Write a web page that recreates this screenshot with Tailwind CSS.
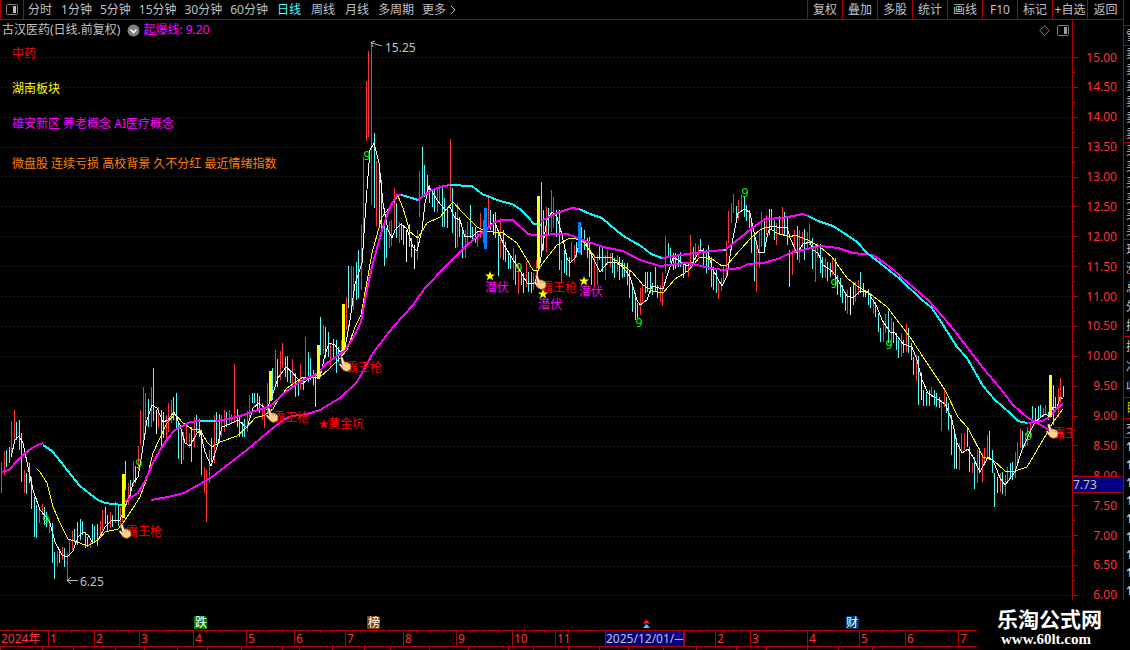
<!DOCTYPE html>
<html lang="zh-CN">
<head>
  <meta charset="UTF-8">
  <meta name="viewport" content="width=device-width, initial-scale=1.0">
  <title>古汉医药 日线</title>
  <script src="https://cdn.jsdelivr.net/npm/@tailwindcss/browser@4"></script>
</head>
<body class="h-screen overflow-hidden bg-black text-[#c0c0c0] text-xs font-['Noto_Sans','Noto_Sans_CJK_SC',sans-serif]">
  <div class="relative flex flex-col h-full">

    <!-- 顶部工具栏 -->
    <header class="flex h-5 shrink-0">
      <div class="flex flex-1 border-b border-[#b00000]">
        <button aria-label="侧栏" class="w-6 shrink-0 border-x border-[#b00000] flex items-center justify-center">
          <svg width="12" height="11" viewBox="0 0 12 11" fill="none"><rect x=".5" y=".5" width="11" height="10" rx="1" stroke="#808080"/><rect x="7" y="2" width="3" height="7" fill="#c0c0c0"/></svg>
        </button>
        <nav class="flex items-center gap-2 pl-[3px] whitespace-nowrap leading-none">
          <button class="px-px">分时</button>
          <button>1分钟</button>
          <button>5分钟</button>
          <button>15分钟</button>
          <button>30分钟</button>
          <button>60分钟</button>
          <button class="px-px text-[#54fcfc]">日线</button>
          <button class="px-px">周线</button>
          <button class="px-px">月线</button>
          <button>多周期</button>
          <button class="flex items-center gap-1">更多<svg width="6" height="10" viewBox="0 0 6 10" fill="none" stroke="#c0c0c0"><path d="M1 1l4 4-4 4"/></svg></button>
        </nav>
        <div class="ml-auto flex whitespace-nowrap leading-none">
          <button class="w-[35px] border-l border-[#b00000]">复权</button>
          <button class="w-[35px] border-l border-[#b00000]">叠加</button>
          <button class="w-[35px] border-l border-[#b00000]">多股</button>
          <button class="w-[35px] border-l border-[#b00000]">统计</button>
          <button class="w-[35px] border-l border-[#b00000]">画线</button>
          <button class="w-[35px] border-l border-[#b00000]">F10</button>
          <button class="w-[35px] border-l border-[#b00000]">标记</button>
          <button class="w-[35px] border-l border-[#b00000]">+自选</button>
          <button class="w-[36px] border-l border-[#b00000]">返回</button>
        </div>
      </div>
      <div class="w-[7px] border-l border-[#b00000]"></div>
    </header>

    <main class="flex flex-1 min-h-0">
      <section class="flex flex-col flex-1 min-w-0">
        <!-- 标题行 -->
        <div class="flex items-center h-5 shrink-0 pl-0.5 pr-[3px] leading-none whitespace-nowrap">
          <h1>古汉医药(日线.前复权)</h1>
          <button aria-label="展开" class="ml-[7px] mr-[3px]">
            <svg width="13" height="13" viewBox="0 0 13 13" fill="none"><circle cx="6.5" cy="6.5" r="6" fill="#808080"/><path d="M3.500 5.500l3 3 3-3" stroke="#fff" stroke-width="1.6"/></svg>
          </button>
          <span class="text-[#ff00ff]">起爆线: 9.20</span>
          <svg class="ml-auto mr-[7px]" width="11" height="11" viewBox="0 0 11 11" fill="none" stroke="#808080"><path d="M5.500.7l4.800 4.800-4.800 4.800L.7 5.500z"/></svg>
          <svg width="12" height="11" viewBox="0 0 12 11" fill="none"><rect x=".5" y=".5" width="11" height="10" rx="1" stroke="#808080"/><rect x="7" y="2" width="3" height="7" fill="#a0a0a0"/></svg>
        </div>

        <!-- K线图 -->
        <svg class="w-full flex-1 min-h-0" viewBox="0 40 1072 590" preserveAspectRatio="xMinYMin meet" fill="none">
          <defs>
            <g id="hand">
              <path d="M-4.500-7.500Q-3-9-2-7L-.5-3Q1.500-3.500 3-2.500 5.500-2 6 0L6 3.500Q4.500 6.500 1 6.500-2 6-3.500 3L-6-.5Q-5.500-2-4-.5L-3 .5z" fill="#ffd08a" stroke="#7a3c10" stroke-width=".8"/>
              <path d="M-3.300-7.500L-2-1.500M-5-.8L-3 2" stroke="#fff" stroke-width="1.200"/>
              <path d="M1-2.500v2.500M3.500-2v2" stroke="#d98c40" stroke-width=".7"/>
            </g>
            <path id="star" d="M0-5L1.300-1.500 5-1.400 2.100.8 3.100 4.400 0 2.300-3.100 4.400-2.100.8-5-1.400-1.300-1.500z"/>
          </defs>

          <path stroke="#a80000" stroke-dasharray="1 3" shape-rendering="crispEdges" d="M1 57.500H1072M1 87.500H1072M1 117.500H1072M1 147.500H1072M1 176.500H1072M1 206.500H1072M1 236.500H1072M1 266.500H1072M1 296.500H1072M1 326.500H1072M1 356.500H1072M1 386.500H1072M1 416.500H1072M1 446.500H1072M1 476.500H1072M1 506.500H1072M1 536.500H1072M1 566.500H1072M1 595.500H1072"/>

          <g shape-rendering="crispEdges" transform="translate(-1 0)">
            <!-- 阳线 -->
            <path stroke="#ff3232" d="M2 462V493M5 451V475M12 421V457M15 410V440M25 470V493M40 508V523M43 504V515M50 519V533M58 551V566M63 547V560M68 553V580M70 540V557M73 531V550M91 542V548M101 521V537M103 510V530M111 512V528M116 501V523M121 507V528M123 507V522M129 483V505M134 461V486M139 446V470M141 410V445M144 387V441M146 393V435M152 387V427M159 407V428M167 415V438M169 403V432M172 400V423M184 432V460M187 425V443M190 433V448M195 417V447M205 467V493M207 470V522M210 450V483M215 415V463M222 415V437M225 410V432M230 410V425M232 414V424M235 364V423M248 411V432M250 395V420M263 403V420M265 408V428M268 383V413M276 350V385M281 351V380M283 343V368M293 359V387M301 364V390M306 337V380M324 325V354M331 343V367M342 340V362M347 297V330M352 266V305M354 267V310M362 225V290M364 157V250M367 81V141M369 51V137M372 45V205M377 161V226M390 221V248M392 220V246M395 188V228M400 222V243M418 230V260M420 171V217M438 188V213M440 185V203M451 139V202M458 203V247M466 230V258M468 222V243M478 232V247M481 213V238M484 220V243M489 197V227M501 218V258M514 248V280M519 263V294M527 262V287M534 273V290M537 260V287M547 207V252M552 190V232M554 197V228M562 260V282M572 242V262M575 245V263M595 255V287M598 255V285M606 255V280M608 250V265M611 253V267M618 255V272M641 288V315M643 285V303M661 285V302M663 273V306M666 236V273M689 263V277M691 235V267M696 243V260M699 245V257M719 283V299M722 278V291M724 265V283M727 241V277M729 211V243M732 203V223M734 194V213M739 200V220M742 194V210M757 240V292M760 232V268M762 212V247M767 215V235M777 223V245M783 207V235M793 250V275M795 230V252M800 230V263M803 232V248M808 232V250M810 224V245M816 245V282M818 243V258M826 258V278M833 257V275M848 290V314M856 282V302M859 280V295M874 298V314M884 322V342M886 314V333M892 318V347M902 333V357M907 324V352M917 355V381M932 387V397M942 400V431M945 388V407M960 443V470M962 433V453M965 433V450M973 463V473M978 450V483M983 453V482M985 448V463M988 435V457M1001 473V492M1006 475V496M1008 467V482M1016 452V478M1018 442V463M1021 429V448M1026 433V447M1028 427V446M1031 423V438M1044 408V417M1046 405V415M1059 388V418M1061 378V403"/>
            <!-- 阴线 -->
            <path stroke="#54fcfc" d="M7 450V467M10 447V463M17 422V440M20 420V450M22 433V482M27 473V494M30 463V483M32 477V509M35 497V537M37 505V538M45 507V525M47 512V527M53 523V563M55 552V579M60 549V563M65 548V567M75 529V542M78 522V545M81 519V540M83 521V535M86 532V548M88 537V547M93 524V543M95 526V542M98 524V546M106 507V524M108 515V532M113 515V527M119 504V526M126 461V490M131 480V497M136 466V483M149 399V427M154 368V421M162 410V447M164 412V438M174 397V420M177 393V430M179 423V459M182 432V464M192 427V462M197 415V432M200 419V437M202 430V475M212 438V462M217 412V443M220 414V442M227 412V427M238 409V427M240 417V437M243 422V437M245 419V437M253 393V403M255 393V403M258 393V410M260 396V413M273 368V400M278 359V387M286 357V377M288 356V382M291 370V383M296 373V397M299 380V396M304 377V390M309 352V382M311 358V380M314 370V385M316 373V407M321 317V355M326 327V358M329 332V357M334 339V358M337 340V373M339 347V362M349 266V308M357 262V300M359 250V298M375 133V208M380 165V225M382 180V230M385 226V266M387 228V258M397 203V238M402 223V240M404 225V245M410 224V247M412 238V257M423 147V195M425 165V197M428 175V190M430 185V203M433 190V207M435 190V212M443 188V227M445 198V227M448 207V228M453 188V233M456 212V248M460 217V237M463 227V258M471 205V238M473 227V242M476 227V243M491 210V230M496 212V238M499 230V276M504 230V260M506 242V262M509 253V269M511 255V269M516 255V285M522 272V285M524 273V293M529 272V292M532 272V293M542 182V255M544 210V250M549 208V235M557 210V237M560 210V270M565 250V273M567 253V275M570 257V277M577 242V257M582 227V255M585 230V250M588 238V258M590 237V277M592 252V285M600 247V260M603 247V272M613 253V273M615 258V278M620 257V280M623 260V278M625 263V277M628 263V285M630 270V298M633 283V312M636 293V320M638 303V318M646 272V293M648 272V292M651 272V293M653 283V295M656 267V292M658 285V298M669 243V257M671 248V263M674 253V270M676 253V269M679 254V267M681 252V267M684 262V278M686 262V273M694 247V263M701 239V253M704 248V267M707 250V273M709 245V270M712 257V287M714 267V290M717 270V293M737 206V223M745 197V217M747 205V221M750 210V228M752 220V253M755 232V281M765 220V253M770 209V235M772 209V230M775 220V240M780 216V235M785 212V235M788 218V245M790 250V287M798 226V260M805 229V260M813 238V269M821 244V273M823 257V278M828 262V281M831 263V277M836 258V285M838 275V295M841 278V297M843 285V303M846 293V311M854 282V305M861 272V293M864 283V297M866 290V297M869 289V305M871 293V308M876 302V317M879 313V332M881 328V342M889 311V343M894 322V343M897 333V350M899 340V358M904 340V353M909 328V353M912 343V360M914 357V375M919 356V405M924 390V406M927 392V406M930 390V406M935 390V405M937 393V407M940 397V408M947 397V413M949 403V430M952 415V455M955 433V469M968 427V447M970 447V472M975 457V489M980 448V473M990 431V460M993 450V473M995 473V507M998 477V493M1003 472V494M1011 463V477M1013 462V480M1023 431V450M1033 406V423M1036 408V422M1039 406V420M1041 405V418M1049 412V420M1054 385V425M1056 397V410M1064 386V397"/>
            <path stroke="#fff" d="M157 410V434M407 230V262M415 245V269M494 214V235M851 287V315M922 373V400M957 443V469"/>
          </g>

          <!-- 均线 -->
          <g stroke-linejoin="round" shape-rendering="crispEdges">
            <path stroke="#fff" d="M11 457L15 440 19 436 23 443 28 467 33 490 40 510 47 518 50 523 55 542 62 555 67 557 73 551 78 537 83 532 88 535 93 543 98 540 105 527 112 520 120 520 125 507 130 495 133 483 138 477 142 453 147 420 152 405 157 408 163 422 168 420 174 412 180 425 185 443 190 446 197 433 200 431 205 452 211 466 217 447 222 427 230 424 238 420 247 428 253 408 259 403 267 410 278 378 286 367 292 372 302 384 310 378 315 375 320 377 325 355 329 343 335 345 340 352 345 348 350 320 355 284 362 263 366 203 370 150 374 143 379 163 383 203 388 230 392 238 395 230 401 224 407 229 413 247 417 251 422 230 425 203 429 186 437 200 445 210 450 207 455 218 460 220 465 237 473 236 477 232 484 231 492 223 495 223 503 243 513 260 518 267 527 283 535 283 540 263 547 220 552 212 557 217 562 235 567 258 570 263 575 258 580 242 585 241 590 252 600 272 608 262 617 263 623 267 630 277 637 300 640 305 647 300 652 286 663 289 668 273 673 258 675 258 687 266 693 262 700 250 708 253 713 270 722 286 727 276 732 243 738 213 745 209 750 213 755 237 759 253 764 252 767 237 770 226 777 227 787 227 790 238 797 253 803 244 810 242 813 250 818 253 823 265 833 272 842 287 847 296 853 298 860 291 868 292 877 307 882 320 890 332 895 333 903 344 912 347 917 360 922 380 928 393 945 404 952 420 957 443 962 453 968 449 973 457 980 472 988 457 993 460 1000 478 1005 485 1015 472 1022 450 1030 432 1035 422 1045 414 1050 417 1053 407 1057 408 1060 397 1063 399"/>
            <path stroke="#ff0" d="M37 469L40 472 47 483 53 507 60 523 68 539 80 543 87 546 93 543 100 538 105 532 118 529 123 523 133 508 140 497 147 478 153 453 160 438 167 423 175 414 183 423 192 429 200 430 207 442 212 447 220 442 237 436 247 427 255 418 265 415 273 409 278 400 287 388 303 377 320 377 328 370 340 358 347 350 355 327 361 315 366 287 372 253 382 217 390 207 398 196 403 208 410 232 418 238 427 223 440 217 453 202 463 213 477 227 485 231 503 233 517 243 533 270 538 270 545 260 557 245 570 238 582 240 588 248 595 257 610 257 620 263 632 272 643 285 653 291 663 293 675 279 688 271 700 257 712 259 722 266 727 265 740 250 752 237 760 230 767 227 777 233 790 237 795 235 808 240 820 247 832 257 847 278 857 286 873 296 887 307 910 337 927 363 945 390 958 417 968 428 983 457 993 460 1005 471 1015 471 1027 467 1037 450 1047 433 1053 422 1063 409"/>
            <path stroke="#f0f" stroke-width="2" d="M151 500L168 497 184 493 200 484 212 477 230 463 247 450 268 432 283 420 292 416 307 414 320 410 340 398 357 382 373 353 393 327 413 305 425 288 447 265 467 245 483 232 495 222 503 220 513 220 528 234 540 236 553 234 567 234 583 240 603 247 623 251 640 260 660 266 687 263 697 265 710 268 723 270 740 268 748 264 763 263 778 259 790 253 807 249 820 246 838 248 853 253 873 255 890 267 900 276 928 300 950 325 967 347 983 368 1000 388 1013 405 1028 418 1043 426 1053 433 1063 433"/>
            <path stroke="#f0f" stroke-width="2" d="M1 472L9 470 17 461 24 454 32 448 38 445 43 443M124 502L130 498 138 493 145 481 152 465 160 450 168 438 175 430 182 426 190 422 200 421M216 421L228 419 240 416 252 412 260 409 268 407 273 404 283 394 295 385 305 379 317 374 327 363 343 352 352 340 361 322 365 300 368 284 373 263 382 230 390 207 397 195 401 195M418 200L430 191 440 187 450 185M541 221L557 213 572 208 579 209M662 258L680 255 703 252 723 250M726 249L740 238 752 228 765 219 783 218 803 214 808 216M1027 423L1042 421 1050 417 1057 408 1063 404"/>
            <path stroke="#0ff" stroke-width="2" d="M43 445L52 451 61 462 71 475 80 486 90 494 98 500 105 503 113 504 122 505M200 421H216M401 195L412 198 418 200M450 185L472 186 482 194 500 201 512 204 520 209 528 217 534 224 541 225M579 209L590 214 602 218 610 225 622 235 632 241 641 246 651 254 662 258M723 250H726M808 216L818 221 833 226 847 235 857 242 867 253 880 263 900 279 922 300 932 308 945 328 957 347 967 358 983 386 995 400 1010 413 1018 421 1027 423"/>
            <path stroke="#ff0" stroke-width="3" d="M123.500 474V518M270.500 371V401M318.500 345V379M343.500 304V350M538.500 196V268M1050.500 375V417"/>
            <path stroke="#0080ff" stroke-width="3" d="M485.500 208V249M579.500 222V253"/>
          </g>

          <!-- 信号标记 -->
          <g fill="#ff0000" font-size="12">
            <text x="126" y="536">霸王枪</text>
            <text x="273" y="422">霸王枪</text>
            <text x="346" y="372">霸王枪</text>
            <text x="541" y="292">霸王枪</text>
            <text x="1053" y="438">霸王枪</text>
            <text x="328" y="428">黄金坑</text>
            <use href="#star" x="324" y="424"/>
          </g>
          <use href="#hand" x="125" y="532"/>
          <use href="#hand" x="272" y="416"/>
          <use href="#hand" x="345" y="365"/>
          <use href="#hand" x="540" y="283"/>
          <use href="#hand" x="1052" y="432"/>
          <g fill="#ff00ff" font-size="12">
            <text x="485" y="292">潜伏</text>
            <text x="538" y="309">潜伏</text>
            <text x="579" y="296">潜伏</text>
          </g>
          <g fill="#ffff00">
            <use href="#star" x="490" y="276"/>
            <use href="#star" x="543" y="294"/>
            <use href="#star" x="584" y="281"/>
          </g>
          <g fill="#00ff00" font-size="12" text-anchor="middle">
            <text x="46" y="524">9</text>
            <text x="139" y="468">9</text>
            <text x="367" y="160">9</text>
            <text x="519" y="272">9</text>
            <text x="639" y="327">9</text>
            <text x="745" y="197">9</text>
            <text x="834" y="288">9</text>
            <text x="889" y="349">9</text>
            <text x="1029" y="440">9</text>
          </g>

          <!-- 最高价 / 最低价 -->
          <g fill="#c0c0c0" font-size="12">
            <text x="385" y="52">15.25</text>
            <text x="80" y="586">6.25</text>
          </g>
          <path stroke="#c0c0c0" d="M382 46L372 43M375 41L371 42.500 373 47M78 580.500H67M71 577L67 580.500 71 584"/>

          <!-- 板块与概念 -->
          <g font-size="12">
            <text x="12" y="58" fill="#ff0000">中药</text>
            <text x="12" y="93" fill="#ffff00">湖南板块</text>
            <text x="12" y="128" fill="#ff00ff">雄安新区 养老概念 AI医疗概念</text>
            <text x="12" y="168" fill="#ff8000">微盘股 连续亏损 高校背景 久不分红 最近情绪指数</text>
          </g>

          <!-- 事件 -->
          <path fill="#008000" d="M194 616h11l2 2v11h-13z"/>
          <path fill="#804000" d="M367 616h11l2 2v11h-13z"/>
          <path fill="#003870" d="M846 616h11l2 2v11h-13z"/>
          <g fill="#ffffff" font-size="12">
            <text x="195" y="627">跌</text>
            <text x="368" y="627">榜</text>
            <text x="846" y="627">财</text>
          </g>
          <path fill="#ff2020" d="M646.500 619.500L650 623.500H643z"/>
          <path fill="#54c8ff" d="M646.500 624L650 628H643z"/>
        </svg>
      </section>

      <!-- 价格轴 -->
      <aside class="relative w-[51px] h-[580px] shrink-0 border-l border-[#b00000] pt-[37px] pb-1 text-[#ff3232]">
        <div id="price-axis" class="flex flex-col justify-between h-full"></div>
        <div class="absolute inset-x-0 top-[456px] h-[17px] border-y border-[#b00000] bg-[#000080] text-[#c0c0c0] leading-[15px]">7.73</div>
      </aside>

      <!-- 右侧信息栏 -->
      <aside class="w-[7px] h-[580px] shrink-0 border-l border-[#b00000] overflow-hidden leading-4">
        <div class="h-[6px] border-b border-[#b00000]"></div>
        <div class="h-5 border-b border-[#b00000] w-3 pl-0.5 pt-0.5">雪</div>
        <div class="h-[97px] border-b border-[#b00000] w-3 pl-0.5 break-all overflow-hidden">卖卖卖卖卖卖</div>
        <div class="h-[97px] border-b border-[#b00000] w-3 pl-0.5 break-all overflow-hidden">买买买买买买</div>
        <div class="h-[97px] border-b border-[#b00000] w-3 pl-0.5 break-all overflow-hidden leading-[19px]">现涨总外换</div>
        <div class="h-[61px] border-b border-[#b00000] w-3 pl-0.5 break-all overflow-hidden leading-5">换净收</div>
        <div class="h-[21px] border-b border-[#b00000] w-3 pl-0.5 leading-5 text-[#c0c000]">目</div>
        <div class="h-[19px] border-b border-[#b00000] w-3 pl-0.5 leading-5">交</div>
        <div class="w-3 pl-0.5 break-all font-bold leading-[18px]">1<br>1<br>1<br>1<br>1<br>1<br>1<br>1<br>1</div>
      </aside>
    </main>

    <!-- 时间轴 -->
    <footer class="shrink-0 h-5 overflow-hidden">
      <div id="time-axis" class="grid h-[17px] border-y border-[#b00000] text-[#ff3232] leading-[15px]"></div>
      <div id="bottom-tabs" class="grid h-[3px]"></div>
    </footer>

    <div class="absolute right-0 bottom-0 w-[153px] h-[45px] bg-black text-white font-bold pl-5">
      <p class="text-[21px] leading-7">乐淘公式网</p>
      <p class="pl-1 text-[15px] leading-3 font-['Liberation_Serif',serif]">www.60lt.com</p>
    </div>
  </div>

  <script>
    // 价格刻度：整档带标签，中间为短刻度
    const priceAxis = document.getElementById('price-axis');
    for (let i = 0; i <= 36; i++) {
      const row = document.createElement('div');
      row.className = 'flex items-center h-px';
      if (i % 2 === 0) {
        row.innerHTML = '<i class="w-[5px] h-px bg-[#b00000]"></i><span class="ml-auto mr-1.5">' + (15 - i / 4).toFixed(2) + '</span>';
      } else {
        row.innerHTML = '<i class="w-0.5 h-px bg-[#b00000]"></i>';
      }
      priceAxis.appendChild(row);
    }

    // 按宽度比例生成列
    const columns = (widths) => widths.map((w) => 'minmax(0, ' + w + 'fr)').join(' ');

    // 月份标签和宽度
    const months = [
      ['2024年', 48], ['1', 46], ['2', 45], ['3', 54], ['4', 53], ['5', 48], ['6', 51], ['7', 58],
      ['8', 53], ['9', 56], ['10', 43], ['11', 50], ['2025/12/01/—', 79], ['', 31], ['2', 35],
      ['3', 57], ['4', 52], ['5', 46], ['6', 53], ['7', 172]
    ];
    const timeAxis = document.getElementById('time-axis');
    timeAxis.style.gridTemplateColumns = columns(months.map((m) => m[1]));
    months.forEach(([label, width], i) => {
      const cell = document.createElement('div');
      cell.className = 'relative border-l border-[#b00000] pl-px whitespace-nowrap';
      if (i === 0) cell.className = 'relative pl-px whitespace-nowrap';
      if (width === 79) cell.className = 'border-x border-[#b00000] whitespace-nowrap overflow-hidden bg-[#000080] text-[#c0c0c0]';
      cell.textContent = label;
      if (i > 0 && width < 79) {
        const ticks = document.createElement('div');
        ticks.className = 'absolute inset-x-0 top-0 flex justify-evenly h-0.5';
        ticks.innerHTML = '<i class="w-px bg-[#b00000]"></i><i class="w-px bg-[#b00000]"></i><i class="w-px bg-[#b00000]"></i>';
        cell.appendChild(ticks);
      }
      timeAxis.appendChild(cell);
    });

    const tabs = [42, 31, 42, 29, 33, 30, 34, 41, 17, 33, 32, 26, 39, 39, 40, 25, 35, 31, 29, 35, 33, 40, 30, 41, 31, 34, 258];
    const bottomTabs = document.getElementById('bottom-tabs');
    bottomTabs.style.gridTemplateColumns = columns(tabs);
    tabs.forEach(() => {
      const tab = document.createElement('div');
      tab.className = 'border-l border-[#b00000]';
      bottomTabs.appendChild(tab);
    });
  </script>
</body>
</html>
